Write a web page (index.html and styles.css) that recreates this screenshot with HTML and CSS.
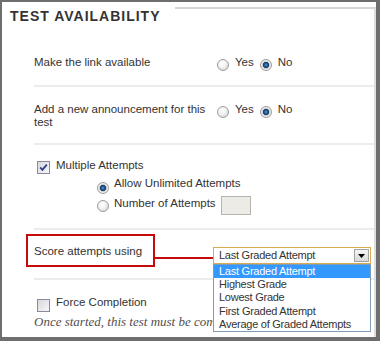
FILE: index.html
```html
<!DOCTYPE html>
<html lang="en">
  <head>
    <meta charset="UTF-8" />
    <meta name="viewport" content="width=device-width" />
    <title>Test Availability</title>
    <link rel="stylesheet" href="styles.css">
  </head>
  <body>
    <div class="frame">
      <div class="head">
        <h2 class="head-title">TEST AVAILABILITY</h2>
        <div class="head-rule"></div>
      </div>

      <div class="panel">
        <!-- link -->
        <div class="row row-link">
          <div class="label">Make the link available</div>
          <div class="choices">
            <label class="choice"><span class="radio"></span>Yes</label>
            <label class="choice"><span class="radio on"></span>No</label>
          </div>
        </div>

        <!-- announcement -->
        <div class="row row-announce">
          <div class="label">Add a new announcement for this test</div>
          <div class="choices">
            <label class="choice"><span class="radio"></span>Yes</label>
            <label class="choice"><span class="radio on"></span>No</label>
          </div>
        </div>

        <!-- attempts -->
        <div class="row row-attempts">
          <label class="check-line">
            <span class="checkbox on">
              <svg width="11" height="11" viewBox="0 0 11 11">
                <path d="M2.2 5.4 L4.4 7.8 L8.8 2.6" fill="none" stroke="#2b3f92" stroke-width="1.8" />
              </svg>
            </span>
            Multiple Attempts
          </label>
          <div class="sub">
            <label class="sub-line"><span class="radio on"></span>Allow Unlimited Attempts</label>
            <label class="sub-line sub-number">
              <span class="radio"></span>
              <span class="sub-text">Number of Attempts</span>
              <span class="num-box"></span>
            </label>
          </div>
        </div>

        <!-- score -->
        <div class="row row-score">
          <div class="callout">Score attempts using</div>
          <div class="connector"></div>
          <div class="select-wrap">
            <div class="select">
              <span>Last Graded Attempt</span>
              <span class="select-btn">
                <svg width="7" height="4" viewBox="0 0 7 4"><polygon points="0,0 7,0 3.5,4" fill="#000" /></svg>
              </span>
            </div>
            <ul class="options">
              <li class="is-active">Last Graded Attempt</li>
              <li>Highest Grade</li>
              <li>Lowest Grade</li>
              <li>First Graded Attempt</li>
              <li>Average of Graded Attempts</li>
            </ul>
          </div>
        </div>

        <!-- force completion -->
        <div class="row row-force">
          <label class="check-line"><span class="checkbox"></span>Force Completion</label>
          <p class="note">Once started, this test must be completed in one sitting.</p>
        </div>
      </div>
    </div>
  </body>
</html>
```

FILE: styles.css
```css
body {
  margin: 0;
  font-family: "Liberation Sans", Arial, sans-serif;
  color: #333;
  background-color: #fff;
}

.frame {
  width: 380px;
  height: 341px;
  box-sizing: border-box;
  border: solid #6e6e6e;
  border-width: 2px 4px 4px 2px;
  overflow: hidden;
  display: flex;
  flex-direction: column;
}

.head {
  display: flex;
  padding: 5px 0 0 8px;
}

.head-title {
  margin: 1px 14px 0 0;
  font-size: 14px;
  line-height: 16px;
  font-weight: bold;
  letter-spacing: 1px;
  color: #333;
}

.head-rule {
  flex: 1;
  border-top: 2px solid #d6d6d6;
  border-right: 2px solid #dedede;
}

.panel {
  flex: 1;
  padding-left: 32px;
  border-right: 2px solid #dedede;
  overflow: hidden;
  font-size: 11.5px;
  line-height: 13px;
}

.row {
  border-bottom: 2px solid #ececec;
}

.row-link,
.row-announce {
  display: flex;
  align-items: flex-start;
}

.row-link {
  padding: 32px 0 14px;
}

.row-announce {
  padding: 16px 0 14px;
}

.label {
  width: 180px;
}

.choices {
  display: flex;
  gap: 6px;
  margin-left: 3px;
}

.choice {
  display: flex;
  align-items: flex-start;
}

.radio {
  display: inline-block;
  flex: none;
  width: 12px;
  height: 12px;
  box-sizing: border-box;
  border: 1px solid #9c9c9c;
  border-radius: 50%;
  background: radial-gradient(circle at 40% 35%, #fff 0, #f3f3f3 40%, #cfcfcf 100%);
}

.radio.on {
  background: radial-gradient(circle, #5a9ad2 0, #1f5c98 1.6px, #163a66 2.8px, #c4c4c4 3.4px, #f4f4f4 4.4px, #d2d2d2 6px);
}

.choice .radio {
  margin: 3px 6px 0 0;
}

/* attempts */
.row-attempts {
  padding: 14px 0 13px;
}

.check-line {
  display: flex;
  align-items: flex-start;
}

.checkbox {
  display: inline-flex;
  align-items: center;
  justify-content: center;
  flex: none;
  width: 13px;
  height: 13px;
  box-sizing: border-box;
  margin: 2px 6px 0 3px;
  border: 1px solid #8a8a9c;
  background: linear-gradient(135deg, #d9d9de, #f6f6f8);
}

.sub {
  margin: 3px 0 0 63px;
}

.sub-line {
  display: flex;
  align-items: flex-start;
}

.sub-line .radio {
  margin: 5px 5px 0 0;
}

.sub-number {
  align-items: center;
  margin-top: 2px;
}

.sub-number .radio {
  margin-top: 0;
}

.sub-text {
  align-self: flex-start;
  margin-top: 1px;
}

.num-box {
  width: 30px;
  height: 19px;
  box-sizing: border-box;
  margin-left: 5px;
  border: 1px solid #b4b4ac;
  background-color: #ecebe5;
}

/* score */
.row-score {
  display: flex;
  align-items: flex-start;
  padding: 4px 0 11px;
}

.callout {
  width: 129px;
  height: 33px;
  box-sizing: border-box;
  margin-left: -8px;
  padding: 9px 0 0 6px;
  border: 2px solid #c40a0a;
}

.connector {
  width: 58px;
  height: 2px;
  margin-top: 23px;
  background-color: #c40a0a;
}

.select-wrap {
  position: relative;
  width: 158px;
  margin-top: 13px;
  font-size: 11px;
  letter-spacing: -0.25px;
}

.select {
  height: 17px;
  box-sizing: border-box;
  display: flex;
  align-items: center;
  justify-content: space-between;
  padding-left: 5px;
  border: 1px solid #d9ab55;
  line-height: 15px;
  background-color: #fff;
}

.select-btn {
  width: 15px;
  height: 13px;
  box-sizing: border-box;
  margin-right: 1px;
  display: flex;
  align-items: center;
  justify-content: center;
  border: 1px solid #a2a2a2;
  background: linear-gradient(#f6f6f6, #d8d8d8);
}

.options {
  position: absolute;
  top: 100%;
  left: 0;
  z-index: 1;
  width: 158px;
  box-sizing: border-box;
  margin: 0;
  padding: 0;
  list-style: none;
  border: 1px solid #7f9db9;
  background-color: #fff;
}

.options li {
  padding-left: 5px;
  line-height: 13.2px;
}

.options .is-active {
  background-color: #3399ff;
  color: #fff;
}

/* force completion */
.row-force {
  padding-top: 16px;
  border-bottom: none;
}

.row-force .checkbox {
  margin-top: 3px;
}

/* the open list covers the rest of this line */
.note {
  width: 179px;
  margin: 2px 0 0;
  overflow: hidden;
  font-family: "Liberation Serif", "DejaVu Serif", serif;
  font-style: italic;
  font-size: 13px;
  line-height: 15px;
  color: #505050;
  white-space: nowrap;
}
```
